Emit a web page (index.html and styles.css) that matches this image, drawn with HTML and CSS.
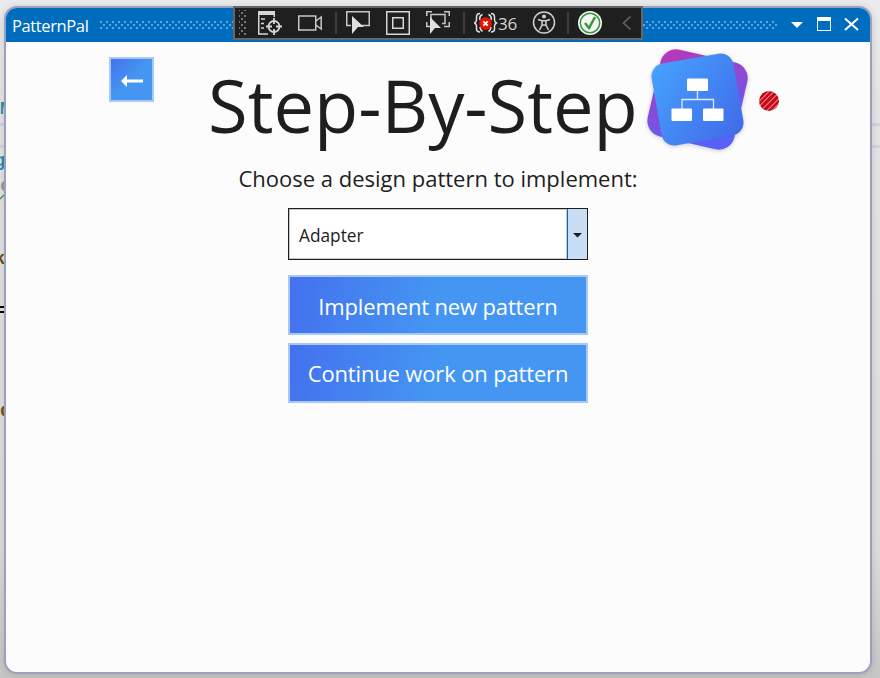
FILE: index.html
```html
<!DOCTYPE html>
<html lang="en">
<head>
<meta charset="utf-8">
<title>PatternPal</title>
<link rel="stylesheet" href="styles.css">
</head>
<body>
<div class="editor" aria-hidden="true">
  <i class="rule r1"></i><i class="rule r2"></i>
  <span class="frag f1">M</span><span class="frag f2">g</span><span class="frag f3">c</span>
  <svg class="frag f4" width="5" height="6" viewBox="0 0 5 6"><path d="M0 5L4 1" stroke="#3b9b3b" stroke-width="1.5"/></svg>
  <span class="frag f5">k</span><span class="frag f6">=</span><span class="frag f7">d</span>
</div>
<main class="window">
  <header class="titlebar">
    <span class="caption">PatternPal</span>
    <span class="grip"></span>
    <svg class="controls" width="70" height="16" viewBox="0 0 70 16" fill="none">
      <path d="M1 5h12l-6 6z" fill="#fff"/>
      <path d="M27 0h14v14H27z" fill="#fff"/><path d="M28 4h12v9H28z" fill="#006cbe"/>
      <path d="M55 1.500l13 11.500M68 1.500L55 13" stroke="#fff" stroke-width="2"/>
    </svg>
  </header>
  <section class="content">
    <div class="hero">
      <button class="back" aria-label="Back"><svg width="24" height="14" viewBox="0 0 24 14"><path d="M1 8l6-6v4.500h16v3H7V14z" fill="#fff"/></svg></button>
      <h1><span>Step-By-Step</span></h1>
      <svg class="logo" width="110" height="112" viewBox="642 44 110 112">
        <defs>
          <linearGradient id="purple" x1="0" y1="0" x2=".65" y2="1"><stop stop-color="#bd35b5"/><stop offset="1" stop-color="#5960f6"/></linearGradient>
          <linearGradient id="blue" x1="0" y1="0" x2="1" y2="1"><stop stop-color="#46a3ff"/><stop offset="1" stop-color="#4169e8"/></linearGradient>
        </defs>
        <rect x="653" y="55" width="89" height="89" rx="16" transform="rotate(13 697.500 99.500)" fill="url(#purple)"/>
        <rect x="656" y="58" width="83" height="83" rx="13" transform="rotate(-10 697.500 99.500)" fill="url(#blue)"/>
        <path d="M697.500 90v9M682 109V99.500h31.500V109" fill="none" stroke="#dfeaff" stroke-width="1.300"/>
        <g fill="#fff"><rect x="687" y="78.500" width="21" height="12.500" rx="1"/><rect x="671.500" y="108.500" width="20.500" height="12.500" rx="1"/><rect x="703" y="108.500" width="20.500" height="12.500" rx="1"/></g>
      </svg>
      <span class="record"></span>
    </div>
    <p class="prompt"><span>Choose a design pattern to implement:</span></p>
    <div class="select"><span class="value">Adapter</span><span class="drop"><svg width="9" height="5" viewBox="0 0 9 5"><path d="M0 0h9L4.500 4.500z" fill="#1e1e1e"/></svg></span></div>
    <button class="action"><span>Implement new pattern</span></button>
    <button class="action"><span>Continue work on pattern</span></button>
  </section>
</main>
<nav class="debugbar">
  <i class="handle"></i>
  <svg width="24" height="24" viewBox="0 0 24 24" fill="none" stroke="#d6d6d6" stroke-width="1.500"><path d="M0 0h17v4H0z" fill="#d6d6d6" stroke="none"/><path d="M.75 3v20H10M16.250 3v3M3 8h4M3 12.500h3M3 17h3"/><circle cx="16" cy="15.500" r="5.500" stroke-width="1.800"/><path d="M16 7v6M16 18v6M8 15.500h6M18 15.500h6" stroke-width="1.800"/></svg>
  <svg width="24" height="24" viewBox="0 0 24 24" fill="none" stroke="#c8c8c8" stroke-width="1.500"><path d="M.75 5h17v14h-17zM18 10l5.200-4v12L18 14"/></svg>
  <i class="sep"></i>
  <svg width="24" height="24" viewBox="0 0 24 24" fill="none" stroke="#c8c8c8" stroke-width="1.500"><path d="M5 14.500H.75V.75h22.500V14.500H16"/><path d="M6 5l12 11h-6l-6 7z" fill="#e0e0e0" stroke="none"/></svg>
  <svg width="24" height="24" viewBox="0 0 24 24" fill="none" stroke="#d6d6d6" stroke-width="1.500"><path d="M.75.75h22.500v22.500H.75zM6.750 6.750h10.500v10.500H6.750z"/></svg>
  <svg width="24" height="24" viewBox="0 0 24 24" fill="none" stroke="#c8c8c8" stroke-width="1.500"><path d="M.75 5V.75H6M18 .75h5.250V5M.75 11v4.500H5M23.250 11v4.500H18M5 11V3.500h14v9h-3"/><path d="M4 6l11 11h-6l-5 6z" fill="#e0e0e0" stroke="none"/></svg>
  <i class="sep"></i>
  <span class="errors"><svg width="24" height="24" viewBox="0 0 24 24" fill="none"><path d="M6 2.500Q2.500 2.500 2.500 6v3q0 2-2 3 2 1 2 3v3q0 3 3.500 3M17 2.500q3.500 0 3.500 3.500v3q0 2 2 3-2 1-2 3v3q0 3-3.500 3M8.500 3.500Q5 5 6 9M6 16q0 3 2.500 4.500M14.500 3.500Q18 5 17 9M17 16q0 3-2.500 4.500" stroke="#e0e0e0" stroke-width="1.500"/><circle cx="11.500" cy="12.500" r="6.300" fill="#e51400"/><path d="M9.300 10.300l4.400 4.400M13.700 10.300l-4.400 4.400" stroke="#fff" stroke-width="1.800"/></svg><b>36</b></span>
  <svg class="access" width="24" height="24" viewBox="0 0 24 24" fill="none" stroke="#d0d0d0" stroke-width="1.500"><circle cx="12" cy="11.500" r="10.500"/><circle cx="12" cy="5.500" r="2" fill="#d0d0d0" stroke="none"/><path d="M6 8.500l4 1.300h4l4-1.300M10 10v4l-2.500 5M14 10v4l2.500 5M10 14h4"/></svg>
  <i class="sep"></i>
  <svg width="24" height="24" viewBox="0 0 24 24" fill="none"><circle cx="12" cy="12" r="12" fill="#f4f4f4"/><circle cx="12" cy="12" r="9.700" stroke="#339933" stroke-width="1.500"/><path d="M7 12l4 5 6-11" stroke="#339933" stroke-width="2.400"/></svg>
  <svg class="chev" width="10" height="16" viewBox="0 0 10 16" fill="none"><path d="M8.500 1.500L1.500 8l7 6.500" stroke="#686868" stroke-width="1.500"/></svg>
</nav>
</body>
</html>
```
FILE: styles.css
```css
* { box-sizing: border-box; }
body {
  margin: 0; width: 880px; height: 678px; padding: 6px 8px 4px 4px; overflow: hidden; position: relative;
  background: linear-gradient(#ececec, #e6e6e6 15%, #dedede 80%, #c6c6c6);
  font-family: "Open Sans", "Noto Sans", sans-serif; color: #1e1e1e;
}
.editor { position: absolute; inset: 0; font: bold 19px/20px "Liberation Mono", monospace; }
.rule { position: absolute; left: 0; right: 0; height: 3px; background: #d4d4dc; }
.r1 { top: 123px; }
.r2 { top: 145px; }
.frag { position: absolute; }
.f1 { top: 99px; color: #2b91af; left: 0; }
.f2 { top: 151px; color: #2b91af; left: -6px; }
.f3 { top: 176px; color: #999; left: 0; }
.f4 { top: 194px; left: 0; }
.f5 { top: 249px; color: #74531f; left: -6px; }
.f6 { top: 301px; color: #000; left: -6px; }
.f7 { top: 401px; color: #74531f; left: 0; }
.window {
  position: relative; height: 668px; border: 2px solid #9b9fc0; border-radius: 13px; overflow: hidden;
  background: #fcfcfc; box-shadow: 0 1px 8px rgba(0, 0, 0, .15);
}
.titlebar { display: flex; align-items: center; height: 34px; padding: 0 9px 0 6px; background: #006cbe; color: #fff; }
.caption { width: 88px; font-size: 16.500px; letter-spacing: -.38px; white-space: nowrap; }
.grip {
  flex: none; width: 678px; height: 8px;
  background: radial-gradient(circle at 1px 1px, #60a6dc 0 1px, transparent 1.300px) 0 0 / 6px 6px,
              radial-gradient(circle at 1px 1px, #60a6dc 0 1px, transparent 1.300px) 3px 3px / 6px 6px;
}
.controls { flex: none; margin-left: 12px; }
.content { display: flex; flex-direction: column; align-items: center; }
.hero { display: flex; align-items: flex-start; width: 864px; height: 122px; padding-left: 103px; }
button { font: inherit; color: #fff; border: 2px solid #aac8f4; padding: 0; }
.back {
  display: flex; align-items: center; justify-content: center; width: 45px; height: 45px; margin-top: 15px;
  background: linear-gradient(135deg, #4471ee, #4496f2 50%);
}
h1 { margin: 18px 0 0 54px; width: 428px; font-size: 73px; line-height: 90px; font-weight: 400; white-space: nowrap; }
h1 span { display: inline-block; transform: scaleX(.99); transform-origin: left; }
.logo { flex: none; margin: 2px 0 0 6px; filter: drop-shadow(0 1px 2px rgba(0, 0, 0, .2)); }
.record {
  flex: none; width: 20px; height: 20px; margin: 49px 0 0 7px; border-radius: 50%;
  background: repeating-linear-gradient(135deg, #c50b17 0 2.600px, #e0606b 2.600px 4px);
}
.prompt { margin: -1px 0 0; height: 45px; font-size: 22px; line-height: 30px; white-space: nowrap; }
.select { display: flex; width: 300px; height: 52px; border: 1px solid #1e1e1e; background: #fff; }
.value { flex: 1; padding-left: 10px; font-size: 17.300px; line-height: 53px; box-shadow: inset 0 0 0 1px #c8c8c8; }
.drop { width: 20px; display: flex; align-items: center; justify-content: center; padding-top: 2px; background: #c9def5; border-left: 1px solid #006cbe; }
.action {
  display: flex; align-items: center; justify-content: center; width: 300px; height: 60px; margin-top: 15px; padding-top: 2px;
  font-size: 22px; letter-spacing: -.15px; background: linear-gradient(100deg, #4471ee, #4496f2 50%); white-space: nowrap;
}
.action + .action + .action, .action:last-child { margin-top: 8px; padding-top: 0; }
.debugbar {
  position: absolute; left: 233px; top: 6px; width: 410px; height: 34px; border: 2px solid #666; background: #1f1f1f;
  display: flex; align-items: center; padding-left: 4px; gap: 16px;
}
.debugbar svg { flex: none; }
.handle {
  width: 8px; height: 26px; margin-right: -5px;
  background: radial-gradient(circle, #777 0 .8px, transparent 1px) 0 0 / 6px 6px,
              radial-gradient(circle, #777 0 .8px, transparent 1px) 3px 3px / 6px 6px;
}
.sep { flex: none; width: 2px; height: 22px; margin: 0 -7px 0 -3px; background: #3d3d3d; }
.errors { display: flex; align-items: center; width: 44px; }
.errors b { font-weight: 400; font-size: 17px; color: #d6d6d6; letter-spacing: -.3px; }
.access { margin-left: -2px; margin-right: -2px; }
.chev { margin-left: 4px; }
```
